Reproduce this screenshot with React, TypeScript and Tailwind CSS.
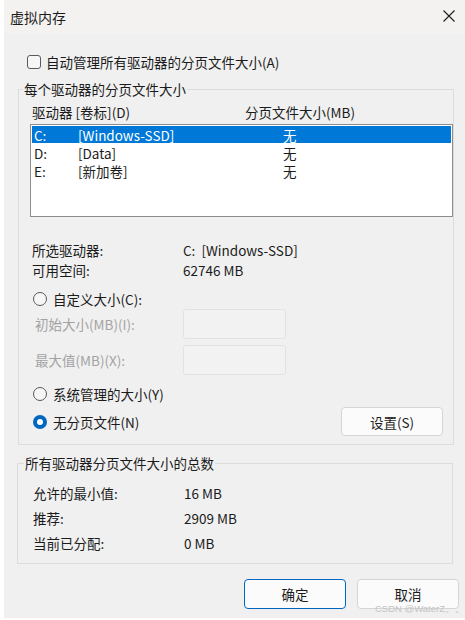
import React from "react";

const font = "font-['Microsoft_YaHei_UI','Noto_Sans_CJK_SC',sans-serif]";

function Radio({ checked }: { checked?: boolean }) {
  if (checked) {
    return (
      <span className="w-[14px] h-[14px] rounded-full bg-[#0067c0] flex items-center justify-center shrink-0">
        <span className="w-[6px] h-[6px] rounded-full bg-white" />
      </span>
    );
  }
  return <span className="w-[14px] h-[14px] rounded-full border border-[#5a5a5a] bg-[#f6f6f6] shrink-0" />;
}

export default function App() {
  return (
    <div className={`w-[465px] h-[620px] bg-white text-[13.5px] text-[#1b1b1b] ${font}`}>
      <div className="ml-[4px] w-[461px] h-[618px] flex flex-col relative">
        {/* Title bar */}
        <div className="h-[34px] bg-[#f3f2f0] flex items-center justify-between pl-[6px] pr-[8px]">
          <span className="text-[14px] leading-[18px]">虚拟内存</span>
          <svg width="14" height="14" viewBox="0 0 14 14" className="mr-[1px] mt-[-2px]">
            <path d="M1.5 1.5 L12.5 12.5 M12.5 1.5 L1.5 12.5" stroke="#1b1b1b" strokeWidth="1.1" />
          </svg>
        </div>
        {/* Body */}
        <div className="flex-1 bg-[#f0f0f0] flex flex-col">
          <div className="mt-[19px] h-[18px] flex items-center pl-[23px] gap-[5px]">
            <span className="w-[14px] h-[14px] rounded-[3px] border border-[#5a5a5a] bg-[#f6f6f6]" />
            <span className="leading-[18px]">自动管理所有驱动器的分页文件大小(A)</span>
          </div>

          {/* Group 1 */}
          <fieldset className="mt-[9px] ml-[14px] w-[436px] border border-[#dcdcdc] pl-[11px] pr-0 pb-[8px] min-w-0">
            <legend className="ml-[-7px] px-[1px] leading-[18px] h-[18px] bg-[#f0f0f0]">每个驱动器的分页文件大小</legend>
            <div className="mt-[5px] h-[18px] flex items-center leading-[18px] pl-[2px]">
              <span className="w-[213px]">驱动器 [卷标](D)</span>
              <span>分页文件大小(MB)</span>
            </div>
            <div className="mt-[3px] w-[423px] h-[93px] border border-[#8c8c8c] bg-white p-[1px] flex flex-col">
              <div className="h-[17px] mb-[1px] flex items-center bg-[#0078d7] text-white leading-[16px] overflow-hidden">
                <span className="w-[46px] pl-[2px]">C:</span>
                <span className="w-[205px]">[Windows-SSD]</span>
                <span>无</span>
              </div>
              <div className="h-[18px] flex items-center leading-[16px] overflow-hidden">
                <span className="w-[46px] pl-[2px]">D:</span>
                <span className="w-[205px]">[Data]</span>
                <span>无</span>
              </div>
              <div className="h-[18px] flex items-center leading-[16px] overflow-hidden">
                <span className="w-[46px] pl-[2px]">E:</span>
                <span className="w-[205px]">[新加卷]</span>
                <span>无</span>
              </div>
            </div>

            <div className="mt-[23px] pl-[2px] h-[20px] flex items-center leading-[20px]">
              <span className="w-[151px]">所选驱动器:</span>
              <span className="whitespace-pre">C:  [Windows-SSD]</span>
            </div>
            <div className="pl-[2px] h-[20px] flex items-center leading-[20px]">
              <span className="w-[151px]">可用空间:</span>
              <span>62746 MB</span>
            </div>

            <div className="mt-[10px] h-[18px] flex items-center gap-[6px] pl-[3px] leading-[18px]">
              <Radio />
              <span>自定义大小(C):</span>
            </div>
            <div className="mt-[1px] h-[30px] flex items-center pl-[5px] text-[#a3a3a3]">
              <span className="w-[148px]">初始大小(MB)(I):</span>
              <span className="w-[103px] h-[30px] rounded-[3px] border border-[#e2e2e2] bg-[#f2f2f2]" />
            </div>
            <div className="mt-[6px] h-[30px] flex items-center pl-[5px] text-[#a3a3a3]">
              <span className="w-[148px]">最大值(MB)(X):</span>
              <span className="w-[103px] h-[30px] rounded-[3px] border border-[#e2e2e2] bg-[#f2f2f2]" />
            </div>

            <div className="mt-[10px] h-[18px] flex items-center gap-[6px] pl-[3px] leading-[18px]">
              <Radio />
              <span>系统管理的大小(Y)</span>
            </div>
            <div className="mt-[4px] h-[29px] flex items-center pl-[3px] pr-[10px]">
              <Radio checked />
              <span className="ml-[6px] leading-[18px]">无分页文件(N)</span>
              <button className="ml-auto w-[102px] h-[29px] rounded-[4px] border border-[#d5d5d5] bg-[#fbfbfb] leading-[18px]">
                设置(S)
              </button>
            </div>
          </fieldset>

          {/* Group 2 */}
          <fieldset className="mt-[9px] ml-[13px] w-[436px] border border-[#dcdcdc] pl-[15px] pr-0 pt-[9px] pb-[7px] min-w-0">
            <legend className="ml-[-9px] px-[1px] leading-[18px] h-[18px] bg-[#f0f0f0]">所有驱动器分页文件大小的总数</legend>
            <div className="h-[25px] flex items-center">
              <span className="w-[151px]">允许的最小值:</span>
              <span>16 MB</span>
            </div>
            <div className="h-[25px] flex items-center">
              <span className="w-[151px]">推荐:</span>
              <span>2909 MB</span>
            </div>
            <div className="h-[25px] flex items-center">
              <span className="w-[151px]">当前已分配:</span>
              <span>0 MB</span>
            </div>
          </fieldset>

          <div className="mt-[15px] flex justify-end gap-[11px] pr-[6px]">
            <button className="w-[102px] h-[30px] rounded-[4px] border-[1.5px] border-[#0067c0] bg-[#fbfbfb] leading-[18px]">
              确定
            </button>
            <button className="w-[102px] h-[30px] rounded-[4px] border border-[#d5d5d5] bg-[#fbfbfb] leading-[18px]">
              取消
            </button>
          </div>
        </div>
        <span className="absolute left-[371px] top-[603px] text-[9.5px] leading-[12px] text-[#c4c4c4] font-['Liberation_Sans',sans-serif] whitespace-nowrap">
          CSDN @WaterZ。。
        </span>
      </div>
    </div>
  );
}
